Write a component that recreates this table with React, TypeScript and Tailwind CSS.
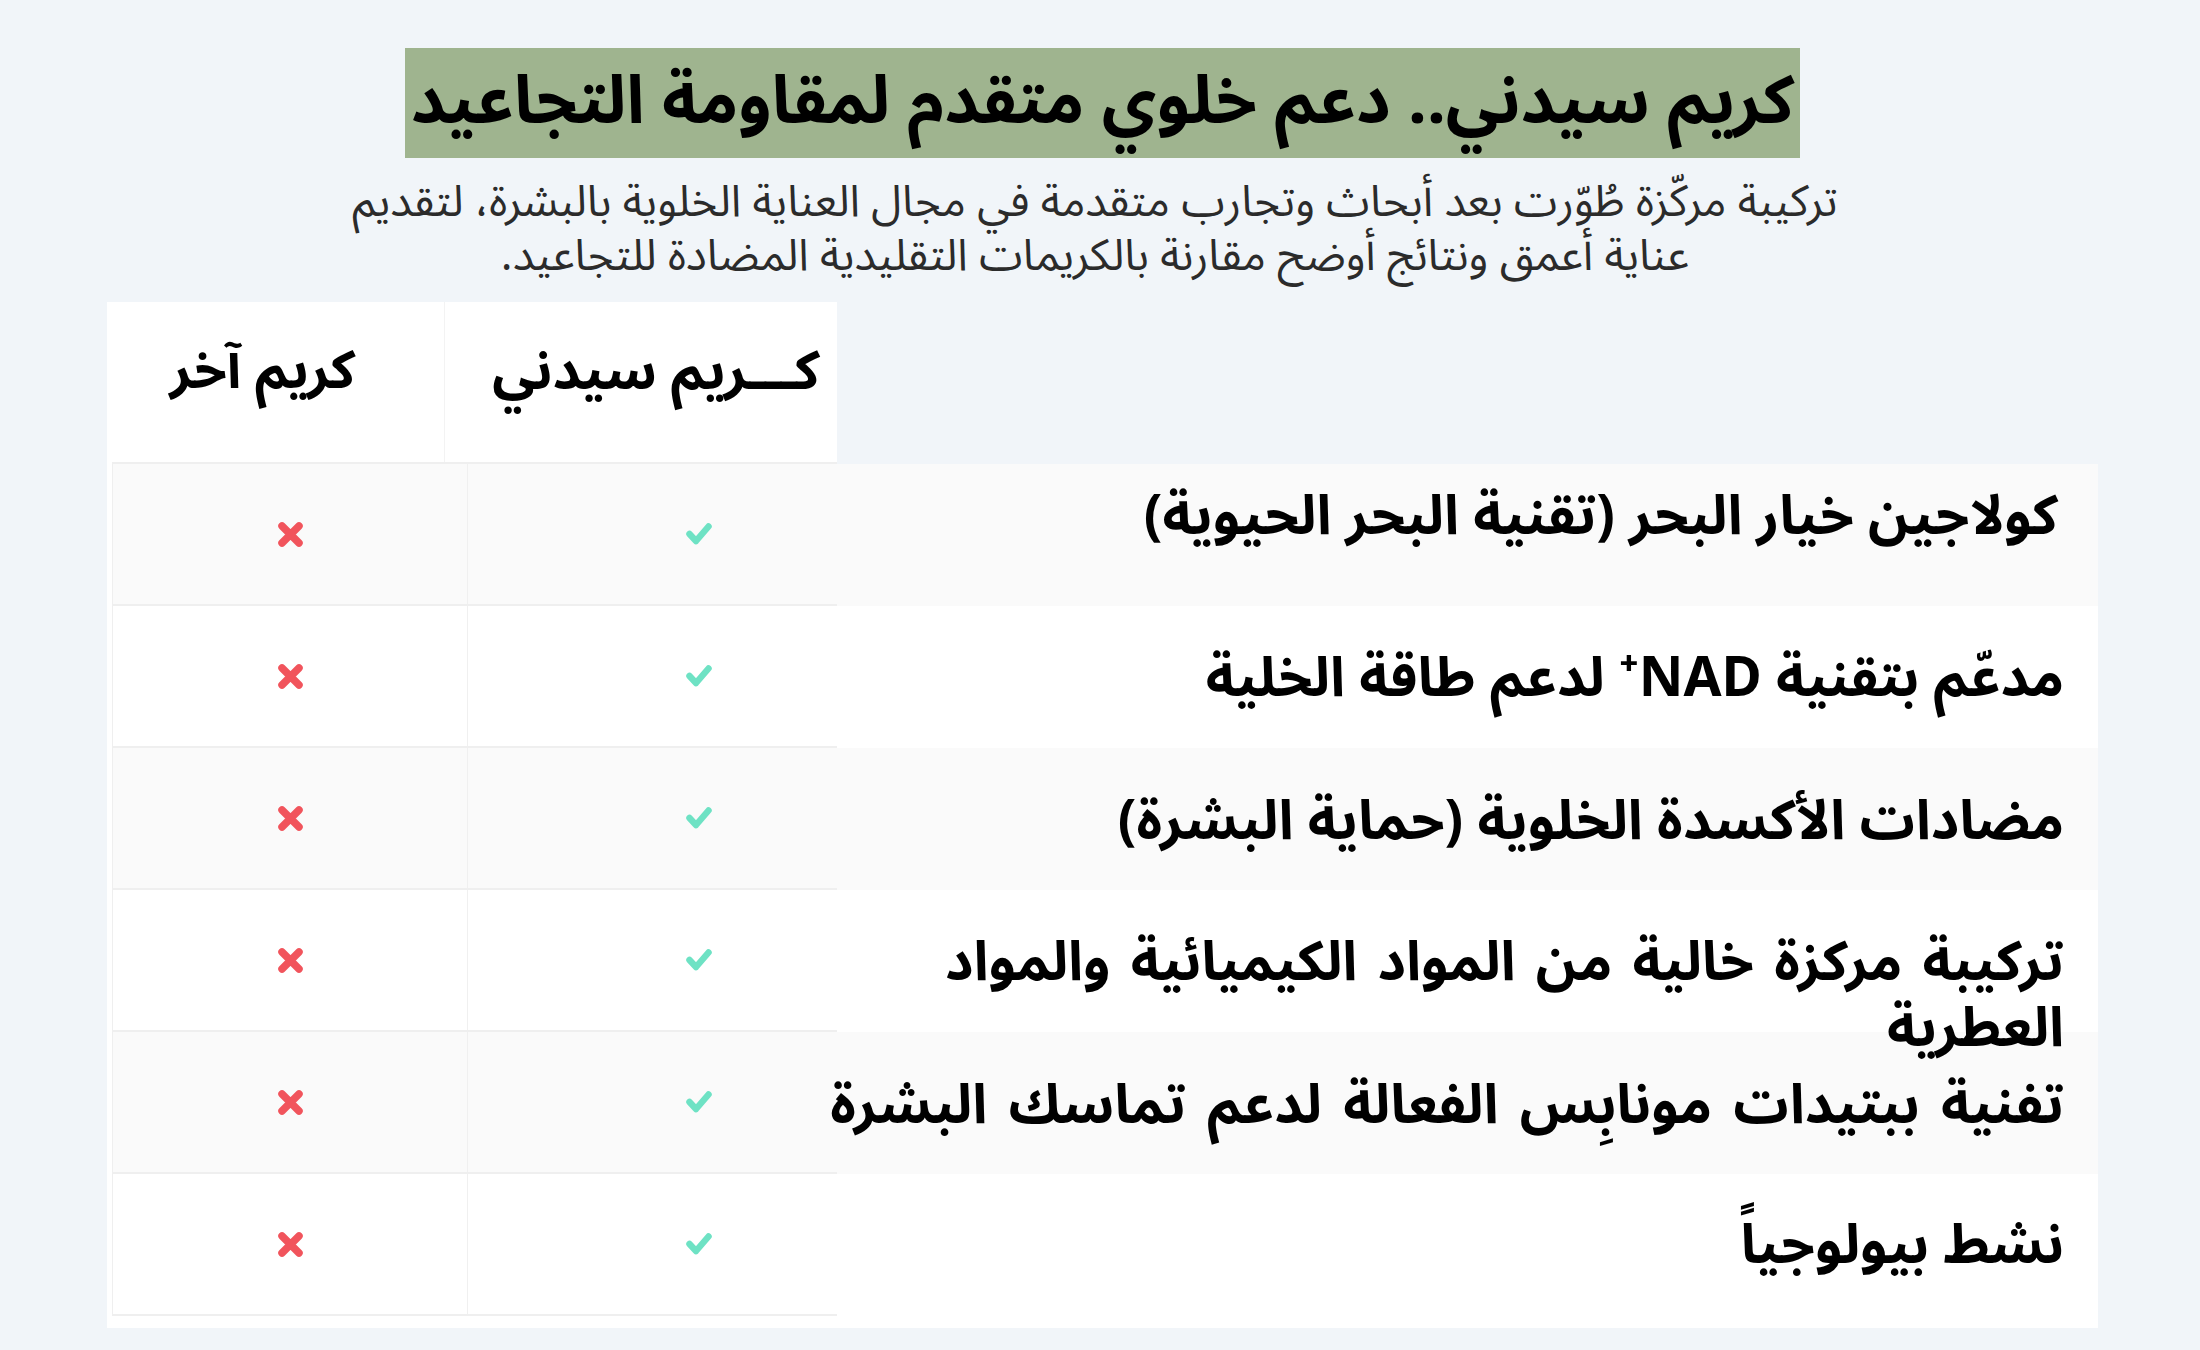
import React from "react";

const rows = [
  { text: "كولاجين خيار البحر (تقنية البحر الحيوية)", shade: true, top: "pt-[16px]", pr: "pr-[40px]", ws: "" },
  { text: "مدعّم بتقنية NAD⁺ لدعم طاقة الخلية", shade: false, top: "pt-[36px]", pr: "pr-[34px]", ws: "" },
  { text: "مضادات الأكسدة الخلوية (حماية البشرة)", shade: true, top: "pt-[37px]", pr: "pr-[34px]", ws: "" },
  { text: "تركيبة مركزة خالية من المواد الكيميائية والمواد", second: "العطرية", shade: false, top: "pt-[36px]", pr: "pr-[34px]", ws: "[word-spacing:6px]" },
  { text: "تفنية ببتيدات مونابِس الفعالة لدعم تماسك البشرة", shade: true, top: "pt-[37px]", pr: "pr-[34px]", ws: "[word-spacing:7px]" },
  { text: "نشط بيولوجياً", shade: false, top: "pt-[35px]", pr: "pr-[34px]", ws: "" },
];

function Check() {
  return (
    <svg width="26" height="22" viewBox="0 0 26 22" fill="none">
      <path d="M3.5 11 L10 18 L22.5 3.5" stroke="#6ee2c4" strokeWidth="6.5" strokeLinecap="round" strokeLinejoin="round" />
    </svg>
  );
}

function Cross() {
  return (
    <svg width="27" height="27" viewBox="0 0 27 27" fill="none">
      <path d="M5 5 L22 22 M22 5 L5 22" stroke="#f1545c" strokeWidth="7.5" strokeLinecap="round" />
    </svg>
  );
}

export default function App() {
  return (
    <div className="min-h-screen w-full bg-[#f1f5f9] pt-[48px] pb-[24px]" style={{ fontFamily: '"Noto Sans", "Noto Sans Arabic", "DejaVu Sans", sans-serif' }}>
      <div className="ml-[107px] w-[1991px]">
        {/* title */}
        <div className="flex justify-center">
          <h1 dir="rtl" className="flex h-[110px] w-[1395px] items-center justify-center whitespace-nowrap bg-[#9fb48f] pb-[12px] text-[67px] leading-[80px] font-bold text-black">
            كريم سيدني.. دعم خلوي متقدم لمقاومة التجاعيد
          </h1>
        </div>

        <p dir="rtl" className="mt-[14px] pr-[15px] text-center text-[44px] leading-[54px] text-[#2b2b2b]">
          تركيبة مركّزة طُوّرت بعد أبحاث وتجارب متقدمة في مجال العناية الخلوية بالبشرة، لتقديم
          <br />
          عناية أعمق ونتائج أوضح مقارنة بالكريمات التقليدية المضادة للتجاعيد.
        </p>

        {/* comparison table */}
        <div className="mt-[22px] flex">
          <div className="w-[730px] bg-white pb-[10px]">
            <div className="flex h-[160px]">
              <div dir="rtl" className="flex w-[337px] items-center justify-center whitespace-nowrap pb-[28px] pr-[26px] text-[53px] font-bold text-black">
                كريم آخر
              </div>
              <div dir="rtl" className="flex flex-1 items-center justify-center whitespace-nowrap border-l border-[#f3f3f3] pb-[28px] pl-[30px] text-[54px] font-bold text-black">
                كـــريم سيدني
              </div>
            </div>
            <div className="ml-[5px] border-l border-t-2 border-[#efefef]">
              {rows.map((r, i) => (
                <div key={i} className={`flex h-[142px] border-b-2 border-[#efefef] ${r.shade ? "bg-[#fafafa]" : "bg-white"}`}>
                  <div className="flex w-[355px] items-center justify-center border-r border-[#f0f0f0]">
                    <Cross />
                  </div>
                  <div className="flex flex-1 items-center pl-[218px]">
                    <Check />
                  </div>
                </div>
              ))}
            </div>
          </div>

          <div className="w-[1261px]">
            <div className="h-[162px]" />
            {rows.map((r, i) => (
              <div key={i} dir="rtl" className={`h-[142px] ${r.top} ${r.pr} ${r.shade ? "bg-[#fafafa]" : "bg-white"}`}>
                <div className={`whitespace-nowrap text-[55px] font-bold leading-[66px] text-black ${r.ws}`}>
                  {r.text}
                  {r.second && (
                    <>
                      <br />
                      {r.second}
                    </>
                  )}
                </div>
              </div>
            ))}
            <div className="h-[12px] bg-white" />
          </div>
        </div>
      </div>
    </div>
  );
}
